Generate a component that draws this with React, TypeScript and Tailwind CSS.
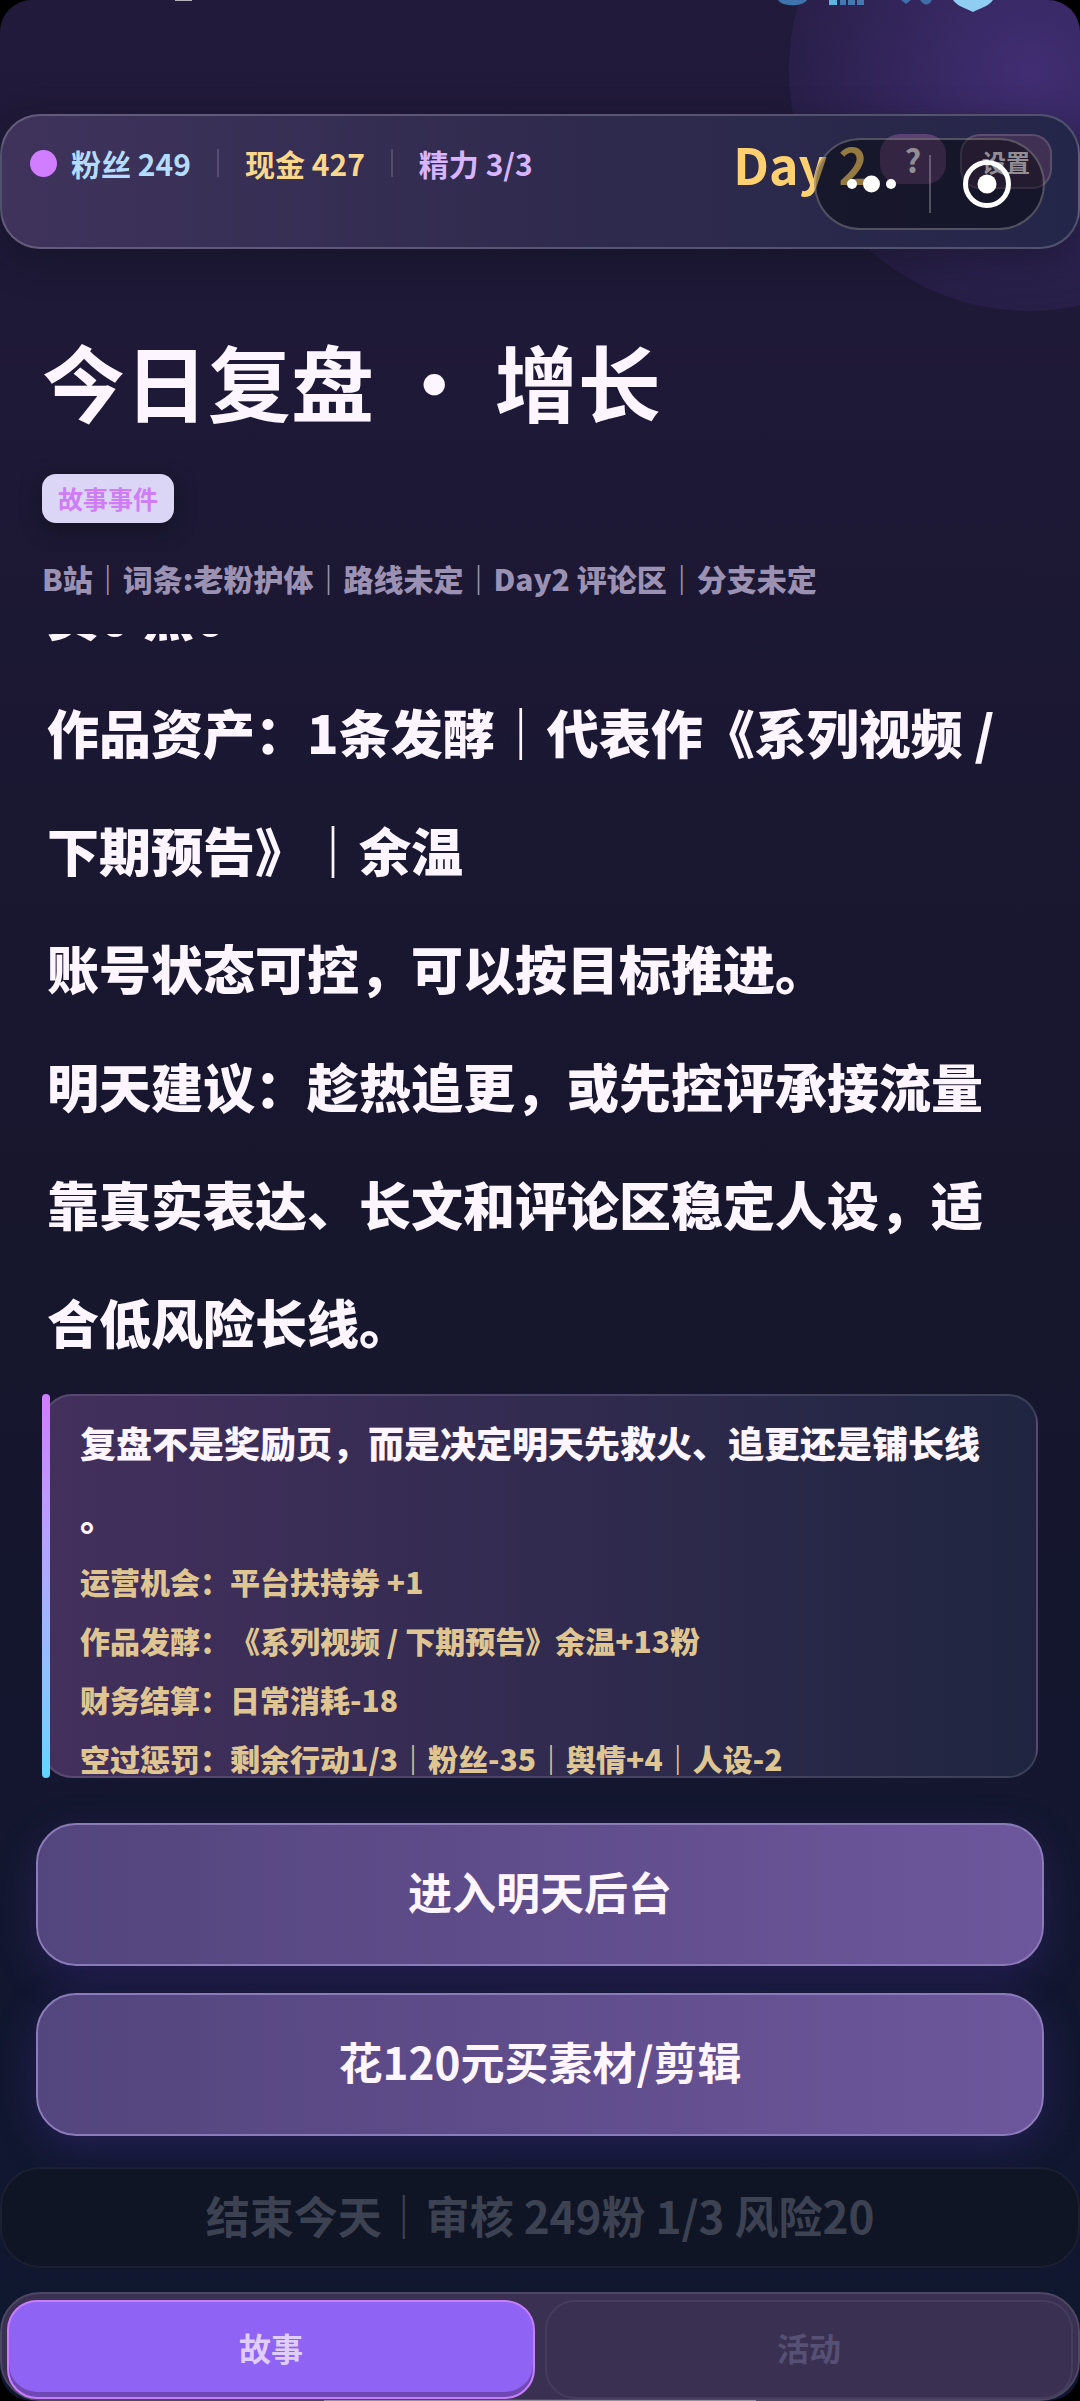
import React, { useState } from 'react';

type TabId = 'story' | 'activity';

const storyLines = [
  '负0 黑0',
  '作品资产：1条发酵｜代表作《系列视频 /',
  '下期预告》｜余温',
  '账号状态可控，可以按目标推进。',
  '明天建议：趁热追更，或先控评承接流量',
  '靠真实表达、长文和评论区稳定人设，适',
  '合低风险长线。',
];

const resultLines = [
  '运营机会：平台扶持券 +1',
  '作品发酵：《系列视频 / 下期预告》余温+13粉',
  '财务结算：日常消耗-18',
  '空过惩罚：剩余行动1/3｜粉丝-35｜舆情+4｜人设-2',
];

const choices = ['进入明天后台', '花120元买素材/剪辑'];

const tabs: { id: TabId; label: string }[] = [
  { id: 'story', label: '故事' },
  { id: 'activity', label: '活动' },
];

const Divider: React.FC = () => <span className="w-0.5 h-7 bg-white/15" />;

const StatusIcons: React.FC = () => (
  <svg className="absolute top-0 right-0 w-[920px] h-4" viewBox="0 0 920 16" fill="none">
    <rect x="15" y="0" width="17" height="1" fill="#b3b0c0" />
    <path d="M618 0h29c-4 7-25 7-29 0z" fill="#3f73ad" />
    <path d="M669 0h8v5h-8z" fill="#5fb4e0" />
    <path d="M680 0h6v5h-6zM688 0h7v5h-7zM697 0h7v5h-7z" fill="#4478b0" />
    <path d="M741 0h10l-5 4zM760 0h12c-3 6-8 6-12 0z" fill="#3d6ea6" />
    <path d="M793 0h40c-4 6-12 8-20 12c-8-4-16-6-20-12z" fill="#8fcdf3" />
  </svg>
);

const Hud: React.FC = () => (
  <header className="relative mt-[114px] h-[135px] shrink-0 rounded-[40px] border-2 border-white/20 bg-linear-to-r from-[#3f335c] via-[#302b4e] to-[#242649] pt-[18px] pl-7 pr-[26px] shadow-[0_12px_36px_rgba(14,16,26,0.45)]">
    <div className="flex items-center h-[58px] text-[30px] font-bold whitespace-nowrap">
      <span className="w-[27px] h-[27px] rounded-full bg-[#d07dff]" />
      <span className="ml-3.5 mr-[26px] text-[#b3dcff]">粉丝 249</span>
      <Divider />
      <span className="mx-[26px] text-[#f9d78c]">现金 427</span>
      <Divider />
      <span className="ml-[26px] text-[#d9b5ff]">精力 3/3</span>
      <span className="ml-auto text-[50px] text-[#ffd070]">Day 2</span>
      <button aria-label="帮助" className="self-start ml-3 w-[66px] h-[50px] rounded-[20px] bg-[#5a4273] text-[32px] leading-none">?</button>
      <button className="self-start ml-3.5 w-[92px] h-[55px] rounded-[20px] border-2 border-white/15 bg-[#3f3054] text-2xl leading-none">设置</button>
    </div>
  </header>
);

const Capsule: React.FC = () => (
  <div className="absolute top-[138px] right-[35px] w-[231px] h-[92px] rounded-full border-2 border-white/25 bg-black/42 flex items-center">
    <button aria-label="更多" className="flex-1 flex justify-center">
      <svg className="w-[50px] h-5" viewBox="0 0 50 20" fill="#fff">
        <circle cx="5" cy="10" r="5" />
        <circle cx="24.5" cy="10" r="8.5" />
        <circle cx="44" cy="10" r="5" />
      </svg>
    </button>
    <span className="w-0.5 h-[58px] bg-white/25" />
    <button aria-label="关闭" className="flex-1 flex justify-center">
      <svg className="w-12 h-12" viewBox="0 0 48 48" fill="none">
        <circle cx="24" cy="24" r="21.5" stroke="#fff" strokeWidth="5" />
        <circle cx="24" cy="24" r="9.5" fill="#fff" />
      </svg>
    </button>
  </div>
);

const App: React.FC = () => {
  const [activeTab, setActiveTab] = useState<TabId>('story');

  return (
    <div className="bg-black">
      <div
        lang="zh-CN"
        className="relative flex flex-col h-screen overflow-hidden rounded-[32px] bg-linear-to-b from-[#211a3b] via-[#17162d] to-[#0f1730] text-[#fdf5ff] font-['Noto_Sans_CJK_SC',sans-serif] [text-spacing-trim:space-all]"
      >
        {/* 右上角光晕 */}
        <div className="absolute -top-[171px] -right-[191px] w-[482px] h-[482px] rounded-full bg-[radial-gradient(closest-side,rgba(139,92,246,0.3),rgba(139,92,246,0.08))]" />
        <StatusIcons />
        <Hud />
        <Capsule />

        <main className="flex flex-col flex-1 min-h-0 px-[42px] pt-[83px]">
          <h1 className="text-[83px] leading-[96px] font-bold">今日复盘 · 增长</h1>
          <span className="self-start mt-[46px] px-4 h-[49px] leading-[49px] rounded-[14px] bg-[#dcd6f6] text-[25px] font-bold text-[#cf7df5] shadow-[0_6px_20px_rgba(14,14,24,0.6)]">
            故事事件
          </span>
          <p className="mt-[35px] text-[30px] leading-10 font-black text-[#9b91b3]">
            B站｜词条:老粉护体｜路线未定｜Day2 评论区｜分支未定
          </p>

          <div className="flex flex-col justify-end flex-1 min-h-0 mt-9 px-[5px] pb-1 overflow-hidden">
            {storyLines.map((line) => (
              <p key={line} className="shrink-0 text-[52px] leading-[118px] font-black whitespace-nowrap">{line}</p>
            ))}
          </div>

          <section className="relative shrink-0 mt-[9px] h-96">
            <div className="h-full rounded-[30px] border-2 border-white/12 bg-linear-to-r from-[#43305d] via-[#322b50] to-[#1f2540] pt-2.5 pl-9 overflow-hidden whitespace-nowrap">
              <p className="text-[36px] leading-[73px] font-black">
                复盘不是奖励页，而是决定明天先救火、追更还是铺长线<br />。
              </p>
              {resultLines.map((line) => (
                <p key={line} className="text-[30px] leading-[59px] font-black text-[#dfc591]">{line}</p>
              ))}
            </div>
            <span className="absolute inset-y-0 left-0 w-2 rounded-full bg-linear-to-b from-[#d07dff] to-[#62d5ff]" />
          </section>
        </main>

        <div className="flex flex-col shrink-0 gap-[27px] mt-[45px] px-9">
          {choices.map((label) => (
            <button
              key={label}
              className="h-[143px] pb-2 rounded-[40px] border-2 border-[#8b7bb8] bg-linear-to-r from-[#53457d] via-[#604d8c] to-[#6d579c] text-[44px] font-bold shadow-[0_12px_40px_rgba(76,50,160,0.32)]"
            >
              {label}
            </button>
          ))}
        </div>

        <button disabled className="relative shrink-0 mt-[31px] h-[101px] pb-1.5 rounded-[40px] border-2 border-[#1b1f31] bg-[#101525] text-[44px] font-bold text-[#3d4252]">
          结束今天｜审核 249粉 1/3 风险20
        </button>

        <nav className="shrink-0 flex gap-2.5 mt-6 h-[109px] rounded-[40px] border-2 border-[#4c4763] bg-[#3a3052] px-[5px] pt-1.5">
          {tabs.map((tab) => (
            <button
              key={tab.id}
              onClick={() => setActiveTab(tab.id)}
              className={`flex-1 pb-1.5 rounded-[30px] border-2 text-[32px] font-bold ${
                activeTab === tab.id
                  ? 'border-[#c87dfa] bg-[#8f63f3] text-[#e0cdfb] shadow-[inset_0_-5px_0_#7048b4]'
                  : 'border-[#453d5e] text-[#565074]'
              }`}
            >
              {tab.label}
            </button>
          ))}
        </nav>
        <span className="absolute bottom-0 left-[30%] right-[30%] h-px bg-white/40" />
      </div>
    </div>
  );
};

export default App;
